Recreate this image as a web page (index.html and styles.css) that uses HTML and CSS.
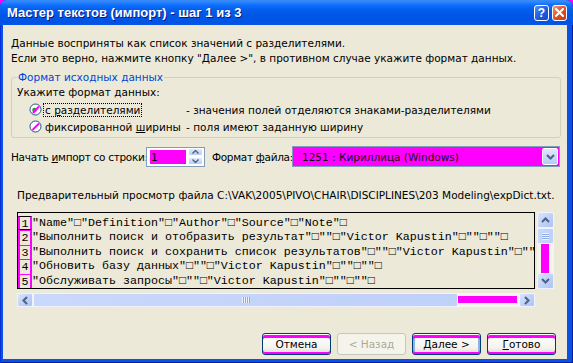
FILE: index.html
```html
<!DOCTYPE html>
<html lang="ru">
<head>
  <meta charset="UTF-8">
  <meta name="viewport" content="width=device-width, initial-scale=1.0">
  <title>Мастер текстов (импорт) - шаг 1 из 3</title>
  <link rel="stylesheet" href="styles.css">
</head>
<body>
  <div class="window">
    <div class="titlebar">
      <span class="title">Мастер текстов (импорт) - шаг 1 из 3</span>
      <div class="caption-buttons">
        <span class="cap-btn help">?</span>
        <span class="cap-btn close">
          <svg width="9" height="9" viewBox="0 0 9 9"><path d="M1 1 L8 8 M8 1 L1 8" stroke="#fff" stroke-width="2" stroke-linecap="square"/></svg>
        </span>
      </div>
    </div>

    <div class="client">
      <p class="intro">Данные восприняты как список значений с разделителями.<br>Если это верно, нажмите кнопку "Далее &gt;", в противном случае укажите формат данных.</p>

      <fieldset class="group">
        <legend>Формат исходных данных</legend>
        <div class="group-label">Укажите формат данных:</div>
        <div class="option">
          <span class="radio">
            <svg width="13" height="13" viewBox="0 0 13 13"><circle cx="6.5" cy="6.5" r="5.5" fill="#fff" stroke="#1c5180"/><circle cx="5.5" cy="7" r="2.3" fill="#21a121"/><path d="M4 10 L10 3.5" stroke="#f0f" stroke-width="2"/></svg>
          </span>
          <span class="opt-label"><span class="focused">с <u>р</u>азделителями</span></span>
          <span class="opt-desc">- значения полей отделяются знаками-разделителями</span>
        </div>
        <div class="option">
          <span class="radio">
            <svg width="13" height="13" viewBox="0 0 13 13"><circle cx="6.5" cy="6.5" r="5.5" fill="#fff" stroke="#1c5180"/><path d="M3.5 10 L10 3.5" stroke="#f0f" stroke-width="2"/></svg>
          </span>
          <span class="opt-label">фиксированной <u>ш</u>ирины</span>
          <span class="opt-desc">- поля имеют заданную ширину</span>
        </div>
      </fieldset>

      <div class="import-row">
        <span class="field-label">Начать <u>и</u>мпорт со строки:</span>
        <div class="spin">
          <span class="spin-value">1</span>
          <span class="spin-buttons">
            <span class="spin-btn"><svg width="7" height="4" viewBox="0 0 7 4"><path d="M0.5 3.5 L3.5 0.5 L6.5 3.5" fill="none" stroke="#4d6185" stroke-width="1.4"/></svg></span>
            <span class="spin-btn"><svg width="7" height="4" viewBox="0 0 7 4"><path d="M0.5 0.5 L3.5 3.5 L6.5 0.5" fill="none" stroke="#4d6185" stroke-width="1.4"/></svg></span>
          </span>
        </div>
        <span class="field-label format-label">Формат <u>ф</u>айла:</span>
        <div class="combo">
          <span class="combo-value">1251 : Кириллица (Windows)</span>
          <span class="combo-btn"><svg width="9" height="6" viewBox="0 0 9 6"><path d="M1 1 L4.5 4.5 L8 1" fill="none" stroke="#4d6185" stroke-width="2"/></svg></span>
        </div>
      </div>

      <div class="preview-label">Предварительный просмотр файла C:\VAK\2005\PIVO\CHAIR\DISCIPLINES\203 Modeling\expDict.txt.</div>

      <div class="preview">
        <div class="preview-main">
          <div class="preview-box">
            <div class="row current"><span class="num">1</span><span class="line">"Name"□"Definition"□"Author"□"Source"□"Note"□</span></div>
            <div class="row"><span class="num">2</span><span class="line">"Выполнить поиск и отобразить результат"□""□"Victor Kapustin"□""□""□</span></div>
            <div class="row"><span class="num">3</span><span class="line">"Выполнить поиск и сохранить список результатов"□""□"Victor Kapustin"□""□""□</span></div>
            <div class="row"><span class="num">4</span><span class="line">"Обновить базу данных"□""□"Victor Kapustin"□""□""□</span></div>
            <div class="row"><span class="num">5</span><span class="line">"Обслуживать запросы"□""□"Victor Kapustin"□""□""□</span></div>
            <div class="row"><span class="num"></span><span class="line"></span></div>
          </div>
          <div class="vscroll">
            <span class="sb-btn"><svg width="9" height="6" viewBox="0 0 9 6"><path d="M1 5 L4.5 1.5 L8 5" fill="none" stroke="#4d6185" stroke-width="2"/></svg></span>
            <span class="sb-thumb v-thumb"><span class="grip-v"></span></span>
            <span class="sb-track v-track"><span class="mark"></span></span>
            <span class="sb-btn"><svg width="9" height="6" viewBox="0 0 9 6"><path d="M1 1 L4.5 4.5 L8 1" fill="none" stroke="#4d6185" stroke-width="2"/></svg></span>
          </div>
        </div>
        <div class="hscroll">
          <span class="sb-btn"><svg width="6" height="9" viewBox="0 0 6 9"><path d="M5 1 L1.5 4.5 L5 8" fill="none" stroke="#4d6185" stroke-width="2"/></svg></span>
          <span class="sb-thumb h-thumb"><span class="grip-h"></span></span>
          <span class="sb-track h-track"><span class="mark"></span></span>
          <span class="sb-btn"><svg width="6" height="9" viewBox="0 0 6 9"><path d="M1 1 L4.5 4.5 L1 8" fill="none" stroke="#4d6185" stroke-width="2"/></svg></span>
        </div>
      </div>

      <div class="buttons">
        <button class="btn marked">Отмена</button>
        <button class="btn" disabled>&lt; Назад</button>
        <button class="btn marked default"><u>Д</u>алее &gt;</button>
        <button class="btn marked"><u>Г</u>отово</button>
      </div>
    </div>
  </div>
</body>
</html>
```

FILE: styles.css
```css
* {
  box-sizing: border-box;
}

html {
  background: #ff00ff;
}

body {
  margin: 0;
  font-family: "DejaVu Sans", sans-serif;
  font-size: 10.5px;
  color: #000;
}

.window {
  width: 573px;
  height: 363px;
  display: flex;
  flex-direction: column;
  background: #0a52e4;
  border-radius: 7px 7px 0 0;
  box-shadow: inset 1px 0 #0831d9, inset -1px 0 #001ea0, inset 0 -1px #001ea0;
  overflow: hidden;
}

/* Title bar */
.titlebar {
  height: 25px;
  display: flex;
  align-items: center;
  padding: 0 6px 0 7px;
  background: linear-gradient(to bottom, #3d8cf3 0, #2a85ff 2px, #0f6ffb 5px, #0460ef 9px, #0057e5 15px, #0054e3 22px, #0a55e6 25px);
}

.title {
  flex: 1;
  color: #fff;
  font-family: "Liberation Sans", sans-serif;
  font-weight: bold;
  font-size: 13px;
  text-shadow: 1px 1px #0a1883;
}

.caption-buttons {
  display: flex;
  gap: 3px;
}

.cap-btn {
  width: 15px;
  height: 16px;
  border: 1px solid #fff;
  border-radius: 3px;
  display: flex;
  align-items: center;
  justify-content: center;
}

.help {
  background: linear-gradient(135deg, #5a8ff5, #2561e6 45%, #1446c8);
  color: #fff;
  font-family: "Liberation Sans", sans-serif;
  font-weight: bold;
  font-size: 12px;
}

.close {
  background: linear-gradient(135deg, #f29b7b, #e2562a 45%, #c23b10);
}

/* Client area */
.client {
  flex: 1;
  margin: 0 6px 4px 3px;
  background: #ece9d8;
  padding: 11px 6px 0 8px;
  display: flex;
  flex-direction: column;
}

.intro {
  margin: 0;
  line-height: 15px;
}

.group {
  margin: 5px 0 0;
  width: 550px;
  border: 1px solid #d0d0bf;
  border-radius: 3px;
  padding: 0 5px 2px 5px;
}

.group legend {
  color: #0046d5;
  padding: 0 1px;
  line-height: 13px;
}

.group-label {
  line-height: 14px;
  margin: 1px 0 2px;
}

.option {
  display: flex;
  align-items: center;
  height: 17px;
  padding-left: 12px;
  white-space: nowrap;
}

.radio {
  width: 13px;
  height: 13px;
  display: flex;
}

.opt-label {
  flex: none;
  width: 144px;
  padding-left: 3px;
  line-height: 14px;
}

.focused {
  display: inline-block;
  border: 1px dotted #000;
  margin-left: -2px;
  padding: 0 1px;
  line-height: 12px;
}

/* Import row */
.import-row {
  margin-top: 8px;
  display: flex;
  align-items: center;
  height: 21px;
  white-space: nowrap;
}

.field-label {
  flex: none;
  width: 135px;
  letter-spacing: -0.3px;
}

.format-label {
  width: 80px;
  margin-left: 7px;
}

.spin {
  flex: none;
  width: 59px;
  height: 20px;
  border: 1px solid #7f9db9;
  background: #fff;
  display: flex;
  align-items: center;
  padding: 1px 1px 1px 3px;
}

.spin-value {
  flex: 1;
  height: 14px;
  line-height: 14px;
  background: #ff00ff;
  padding-left: 1px;
  margin-right: 2px;
}

.spin-buttons {
  display: flex;
  flex-direction: column;
  gap: 1px;
}

.spin-btn {
  width: 15px;
  height: 8px;
  border-radius: 2px;
  background: linear-gradient(#dfe8fd, #b9cdf8);
  border: 1px solid #fff;
  display: flex;
  align-items: center;
  justify-content: center;
}

.combo {
  flex: none;
  width: 268px;
  height: 21px;
  border: 1px solid #7f9db9;
  background: #ff00ff;
  display: flex;
  align-items: center;
  padding: 1px;
}

.combo-value {
  flex: 1;
  padding-left: 8px;
  color: #111;
}

.combo-btn {
  width: 16px;
  height: 17px;
  border-radius: 2px;
  border: 1px solid #fff;
  background: linear-gradient(#dfe8fd, #b6cbf7);
  display: flex;
  align-items: center;
  justify-content: center;
}

/* Preview */
.preview-label {
  margin: 21px 0 0 6px;
  line-height: 14px;
  white-space: nowrap;
}

.preview {
  margin: 10px 0 0 6px;
  width: 537px;
}

.preview-main {
  display: flex;
  gap: 2px;
}

.preview-box {
  width: 518px;
  height: 77px;
  border: 1px solid #000;
  overflow: hidden;
  padding-top: 3px;
  font-family: "Liberation Mono", "DejaVu Sans Mono", monospace;
  font-size: 11.67px;
}

.row {
  display: flex;
  height: 14.4px;
  line-height: 14px;
  white-space: nowrap;
}

.num {
  flex: none;
  width: 14px;
  border-left: 2px solid #ff00ff;
  border-right: 2px solid #ff00ff;
  border-top: 1px solid #ff00ff;
  text-align: center;
}

.row.current .num {
  border-top-color: #000;
  border-bottom: 1px solid #000;
}

/* Scrollbars */
.vscroll {
  width: 17px;
  height: 77px;
  display: flex;
  flex-direction: column;
  background: #f5f4ef;
}

.sb-btn {
  flex: none;
  width: 16px;
  height: 16px;
  border: 1px solid #eef3fe;
  border-radius: 2px;
  background: linear-gradient(135deg, #dbe5fd, #bccff8 60%, #aec3f3);
  display: flex;
  align-items: center;
  justify-content: center;
}

.vscroll .sb-btn,
.v-thumb {
  width: 17px;
}

.sb-thumb {
  border: 1px solid #eef3fe;
  border-radius: 2px;
  background: linear-gradient(to right, #c9d8fc, #bfd0f9);
  display: flex;
  align-items: center;
  justify-content: center;
}

.v-thumb {
  height: 16px;
}

.grip-v {
  width: 7px;
  height: 7px;
  background: repeating-linear-gradient(#eef4fe 0, #eef4fe 1px, #8caae6 1px, #8caae6 2px);
}

.v-track {
  flex: 1;
  padding: 0 5px 0 4px;
  display: flex;
}

.v-track .mark {
  flex: 1;
  background: #ff00ff;
}

.hscroll {
  margin-top: 4px;
  width: 518px;
  height: 14px;
  display: flex;
  background: #f5f4ef;
}

.hscroll .sb-btn {
  height: 14px;
}

.h-thumb {
  width: 425px;
}

.grip-h {
  width: 8px;
  height: 6px;
  background: repeating-linear-gradient(to right, #eef4fe 0, #eef4fe 1px, #8caae6 1px, #8caae6 2px);
}

.h-track {
  flex: 1;
  padding: 3px 2px 4px 0;
  display: flex;
}

.h-track .mark {
  flex: 1;
  background: #ff00ff;
}

/* Buttons */
.buttons {
  margin-top: 26px;
  display: flex;
  justify-content: flex-end;
  gap: 6px;
  padding-right: 5px;
}

.btn {
  width: 69px;
  height: 22px;
  border: 1px solid #003c74;
  border-radius: 3px;
  background: linear-gradient(#fff, #f4f3ee 70%, #dcd8cc);
  font-family: "DejaVu Sans", sans-serif;
  font-size: 10.5px;
  color: #000;
  padding: 0;
}

.btn.marked {
  box-shadow: inset 0 1px 0 #fff, inset 0 4px 0 #ff00ff, inset 0 -2px 0 #ff00ff;
}

.btn.default {
  box-shadow: inset 0 1px 0 #fff, inset 0 4px 0 #ff00ff, inset 0 -2px 0 #ff00ff, inset 0 0 0 2px #8db2e3;
}

.btn:disabled {
  border-color: #c9c7ba;
  background: #f5f4ea;
  color: #aca899;
}
```
